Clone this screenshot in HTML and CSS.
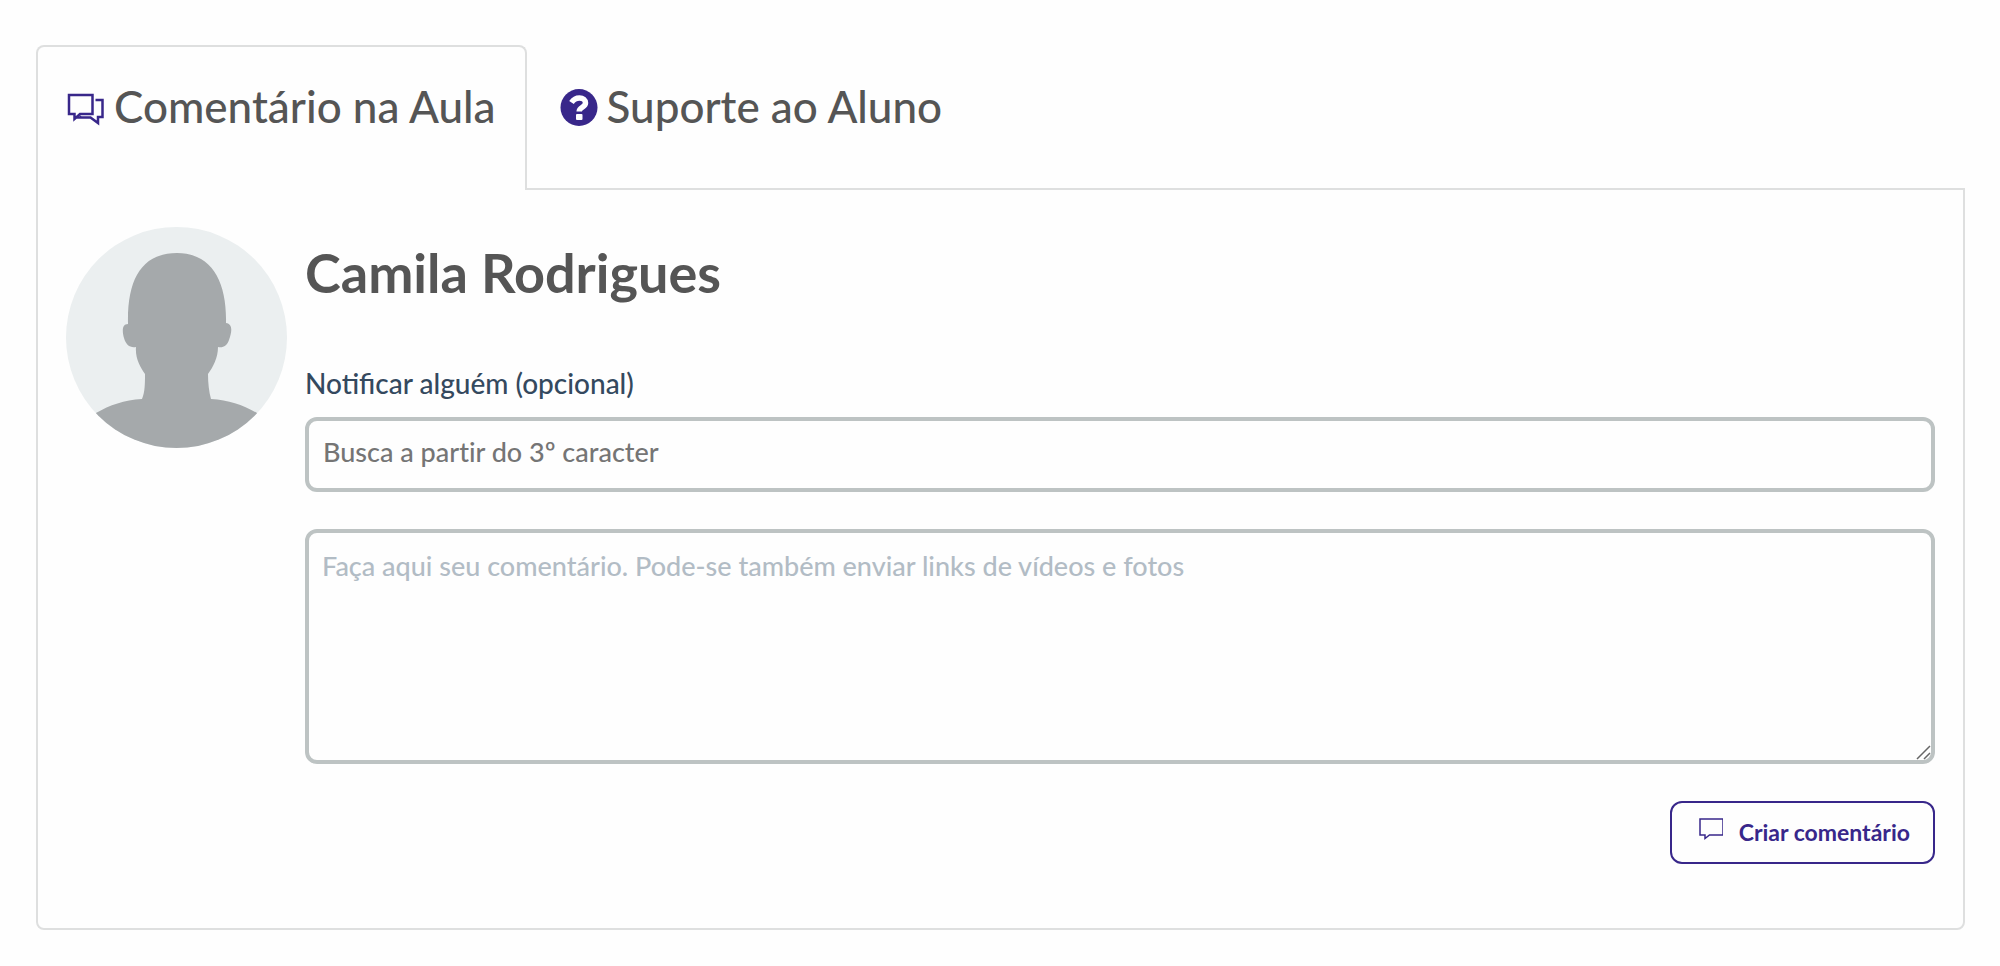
FILE: index.html
```html
<!DOCTYPE html>
<html lang="pt-br">
<head>
	<meta charset="UTF-8">
	<title>Comentário na Aula</title>
	<link rel="stylesheet" href="styles.css">
</head>
<body>
	<div class="container">
		<div class="tabs" role="tablist">
			<button type="button" class="tab active" role="tab" aria-selected="true">
				<svg class="tab-icon" viewBox="0 0 38 38" aria-hidden="true">
					<path d="M2 6H25.500V25H13L7.500 30V25H2Z M28.500 11H35.500V28H31V34L23.500 28.500H13L14.500 27.500" fill="none" stroke="#38278a" stroke-width="2.500"/>
				</svg>
				<span>Comentário na Aula</span>
			</button>
			<button type="button" class="tab" role="tab" aria-selected="false">
				<svg class="tab-icon" viewBox="0 0 38 38" aria-hidden="true">
					<circle cx="19" cy="18.500" r="18.500" fill="#38278a"/>
					<path d="M11.500 13.500C13.500 10.500 16 9 19.500 9C23 9 25.500 11 25.500 14C25.500 18.500 19.200 18 19.200 22.500" fill="none" stroke="#fff" stroke-width="5.500"/>
					<rect x="16" y="25" width="6.500" height="6" rx="1" fill="#fff"/>
				</svg>
				<span>Suporte ao Aluno</span>
			</button>
		</div>
		<div class="panel" role="tabpanel">
			<svg class="avatar" viewBox="0 0 221 221" aria-hidden="true">
				<defs>
					<clipPath id="round"><circle cx="110.500" cy="110.500" r="110.500"/></clipPath>
				</defs>
				<g clip-path="url(#round)">
					<rect width="221" height="221" fill="#ebeff0"/>
					<path d="M62 97C61 52 76 26 111 26C146 26 161 55 160 96C167 97 166 105 163 113C161 119 157 121 152 120C152 131 147 140 142 147C142 156 143 165 145 172C163 173 177 178 191 186L221 221H0L30 186C44 178 58 173 76 172C79 165 79 156 79 147C74 140 69 131 70 120C64 121 60 118 58 111C56 104 56 97 62 97Z" fill="#a5a9ab"/>
				</g>
			</svg>
			<form class="form">
				<h2 class="name">Camila Rodrigues</h2>
				<label class="label" for="notify">Notificar alguém (opcional)</label>
				<input class="field notify" id="notify" type="text" placeholder="Busca a partir do 3º caracter">
				<textarea class="field comment" aria-label="Comentário" placeholder="Faça aqui seu comentário. Pode-se também enviar links de vídeos e fotos"></textarea>
				<button type="button" class="btn">
					<svg class="btn-icon" viewBox="0 0 26 26" aria-hidden="true">
						<path d="M3 3H26V19H12.500L8 22.500V19H3Z" fill="none" stroke="#38278a" stroke-width="1.500"/>
					</svg>
					<span>Criar comentário</span>
				</button>
			</form>
		</div>
	</div>
</body>
</html>
```
FILE: styles.css
```css
* {
    box-sizing: border-box;
    margin: 0;
    padding: 0;
}

body {
    padding: 45px 35px 35px 36px;
    font-family: Lato, sans-serif;
    font-weight: 500;
    background: #fefefe;
}

button,
input,
textarea {
    font-family: inherit;
    font-weight: inherit;
}

.tabs {
    display: flex;
    gap: 2px;
}

.tab {
    display: flex;
    align-items: flex-start;
    gap: 9px;
    height: 145px;
    padding: 31px 29px;
    border: 2px solid transparent;
    border-radius: 8px 8px 0 0;
    background: transparent;
    font-size: 44px;
    line-height: 56px;
    color: #555;
    cursor: pointer;
}

.tab.active {
    z-index: 1;
    border-color: #dedfdf;
    border-bottom: none;
    background: #fefefe;
}

.tab-icon {
    flex: none;
    width: 38px;
    height: 38px;
    margin-top: 11px;
}

.panel {
    display: flex;
    align-items: flex-start;
    gap: 18px;
    margin-top: -2px;
    padding: 37px 28px 64px;
    border: 2px solid #dedfdf;
    border-radius: 0 0 8px 8px;
}

.avatar {
    flex: none;
    width: 221px;
    height: 221px;
}

.form {
    display: flex;
    flex: 1;
    flex-direction: column;
    padding-top: 14px;
}

.name {
    font-size: 54px;
    line-height: 64px;
    color: #555;
}

.label {
    margin-top: 61px;
    font-size: 28px;
    line-height: 34px;
    color: #34495e;
}

.field {
    width: 100%;
    border: 4px solid #bdc3c3;
    border-radius: 12px;
    background: #fefefe;
    font-size: 27px;
    line-height: 34px;
    font-variant-ligatures: none;
    color: #34495e;
}

.notify {
    height: 75px;
    margin-top: 17px;
    padding: 0 14px 6px;
}

.notify::placeholder {
    color: #757575;
}

.comment {
    height: 235px;
    margin-top: 37px;
    padding: 16px 13px;
    resize: none;
    background: #fefefe url("data:image/svg+xml,%3Csvg xmlns='http://www.w3.org/2000/svg' width='16' height='16'%3E%3Cpath d='M2 15L15 2M9 15L15 9' stroke='%23666' stroke-width='1.500'/%3E%3C/svg%3E") no-repeat right bottom;
}

.comment::placeholder {
    color: #b2bcc5;
}

.btn {
    display: flex;
    align-self: flex-end;
    align-items: center;
    gap: 16px;
    height: 63px;
    margin-top: 37px;
    padding: 0 23px 2px 25px;
    border: 2px solid #38278a;
    border-radius: 12px;
    background: transparent;
    font-size: 23px;
    font-weight: bold;
    line-height: 28px;
    color: #38278a;
    cursor: pointer;
}

.btn-icon {
    flex: none;
    width: 26px;
    height: 26px;
    margin-bottom: 6px;
}
```
